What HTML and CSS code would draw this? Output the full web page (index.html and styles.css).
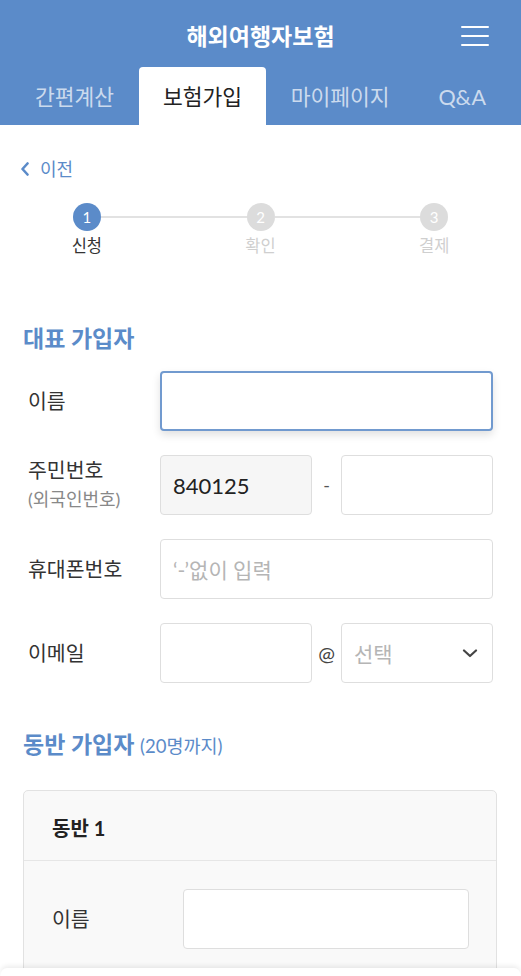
FILE: index.html
```html
<!DOCTYPE html>
<html lang="ko">
<head>
<meta charset="utf-8">
<title>해외여행자보험</title>
<link rel="stylesheet" href="styles.css">
</head>
<body>
<header class="header">
  <div class="topbar">
    <span class="spacer"></span>
    <h1 class="title">해외여행자보험</h1>
    <button class="menu" type="button" aria-label="메뉴"><span></span><span></span><span></span></button>
  </div>
  <nav class="tabs">
    <a class="tab">간편계산</a>
    <a class="tab active">보험가입</a>
    <a class="tab">마이페이지</a>
    <a class="tab">Q&amp;A</a>
  </nav>
</header>

<div class="backwrap">
  <a class="back"><svg class="back-icon" width="10" height="14" viewBox="0 0 10 14"><path d="M7.5 1.5 L2.5 7 L7.5 12.5" fill="none" stroke="currentColor" stroke-width="2.6" stroke-linecap="round" stroke-linejoin="round"/></svg>이전</a>
</div>

<section class="steps">
  <div class="track">
    <span class="num active">1</span><span class="line"></span><span class="num">2</span><span class="line"></span><span class="num">3</span>
  </div>
  <div class="step-labels">
    <span class="step-label active">신청</span>
    <span class="step-label">확인</span>
    <span class="step-label">결제</span>
  </div>
</section>

<main class="main">
  <h2 class="sec-title">대표 가입자</h2>
  <div class="form">
    <div class="row">
      <label class="lbl">이름</label>
      <div class="field focus"></div>
    </div>
    <div class="row">
      <label class="lbl two">주민번호<small class="sub">(외국인번호)</small></label>
      <div class="split">
        <div class="field readonly"><span class="val">840125</span></div>
        <span class="sep">-</span>
        <div class="field"></div>
      </div>
    </div>
    <div class="row">
      <label class="lbl">휴대폰번호</label>
      <div class="field"><span class="ph">‘-’없이 입력</span></div>
    </div>
    <div class="row">
      <label class="lbl">이메일</label>
      <div class="split">
        <div class="field"></div>
        <span class="sep at">@</span>
        <div class="field select"><span class="ph">선택</span><svg class="chev" width="16" height="9" viewBox="0 0 16 9"><path d="M2 1.5 L8 7 L14 1.5" fill="none" stroke="#444" stroke-width="2.2" stroke-linecap="round" stroke-linejoin="round"/></svg></div>
      </div>
    </div>
  </div>

  <h2 class="sec-title sec2">동반 가입자 <span class="sec-sub">(20명까지)</span></h2>
  <div class="card">
    <div class="card-head">동반 1</div>
    <div class="card-body">
      <div class="row card-row">
        <label class="lbl">이름</label>
        <div class="field"></div>
      </div>
    </div>
  </div>
</main>

<div class="bottom-bar"></div>
</body>
</html>
```

FILE: styles.css
```css
* { box-sizing: border-box; }
html, body { margin: 0; padding: 0; }
body {
  width: 521px;
  min-height: 976px;
  background: #fff;
  font-family: "Lato", "Noto Sans CJK KR", sans-serif;
  color: #333;
  overflow: hidden;
}

.header { background: #5b8bc9; }
.topbar {
  height: 67px;
  display: grid;
  grid-template-columns: 1fr auto 1fr;
  align-items: start;
}
.title {
  margin: 21px 0 0;
  font-size: 23px;
  line-height: 30px;
  font-weight: 700;
  color: #fff;
  letter-spacing: 0;
}
.menu {
  justify-self: end;
  margin: 26px 32px 0 0;
  padding: 0;
  width: 28px;
  border: 0;
  background: none;
  display: flex;
  flex-direction: column;
  gap: 7px;
}
.menu span { display: block; height: 2px; background: #fff; border-radius: 1px; }

.tabs {
  height: 58px;
  display: flex;
  justify-content: space-between;
  padding: 0 11px;
}
.tab {
  padding: 1px 24px 0;
  display: flex;
  align-items: center;
  font-size: 21.5px;
  line-height: 28px;
  color: rgba(255,255,255,0.7);
}
.tab.active {
  background: #fff;
  color: #222;
  border-radius: 4px 4px 0 0;
}

.backwrap { padding: 32px 0 0 20px; }
.back {
  display: inline-flex;
  align-items: center;
  gap: 10px;
  font-size: 18px;
  line-height: 24px;
  color: #5b8bc9;
}
.back-icon { display: block; }

.steps { margin-top: 22px; }
.track {
  display: flex;
  align-items: center;
  padding: 0 72.8px;
}
.num {
  width: 28px;
  height: 28px;
  border-radius: 50%;
  background: #dcdcdc;
  color: #fff;
  font-size: 15px;
  line-height: 28px;
  text-align: center;
  flex: none;
}
.num.active { background: #5b8bc9; }
.line { flex: 1; height: 2px; background: #e2e2e2; }
.step-labels {
  margin-top: 3px;
  display: grid;
  grid-template-columns: repeat(3, 1fr);
  text-align: center;
}
.step-label { font-size: 16.5px; line-height: 24px; color: #cfcfcf; }
.step-label.active { color: #333; }

.main { padding: 0 24px 0 23px; }
.sec-title {
  margin: 65px 0 0;
  font-size: 23px;
  line-height: 30px;
  font-weight: 700;
  color: #5b8bc9;
}
.sec2 { margin-top: 46px; }
.sec-sub { font-size: 18.5px; font-weight: 400; color: #5b8bc9; }

.form {
  margin-top: 18px;
  margin-right: 4px;
  display: flex;
  flex-direction: column;
  gap: 24px;
}
.row {
  display: grid;
  grid-template-columns: 137px 1fr;
  align-items: center;
}
.lbl {
  padding-left: 5px;
  font-size: 20.5px;
  line-height: 26px;
  color: #333;
}
.lbl.two { display: flex; flex-direction: column; line-height: 29px; }
.sub { font-size: 18px; color: #888; line-height: 29px; }

.field {
  height: 60px;
  border: 1px solid #dedede;
  border-radius: 4px;
  background: #fff;
  display: flex;
  align-items: center;
  padding: 0 12px;
}
.field.focus {
  border: 2px solid #719acf;
  box-shadow: 0 4px 8px rgba(0,0,0,0.12);
}
.field.readonly { background: #f6f6f6; }
.val { font-size: 22px; color: #222; }
.ph { font-size: 21px; color: #b5b5b5; }
.select { justify-content: space-between; padding-right: 14px; }
.chev { display: block; }

.split {
  display: grid;
  grid-template-columns: 1fr 29px 1fr;
  align-items: center;
}
.sep { text-align: center; font-size: 18px; color: #555; }
.sep.at { font-size: 20px; color: #444; }

.card {
  margin-top: 29px;
  background: #f9f9f9;
  border: 1px solid #e2e2e2;
  border-radius: 5px;
}
.card-head {
  padding: 23px 28px 18px;
  font-size: 20px;
  line-height: 28px;
  font-weight: 700;
  color: #222;
  border-bottom: 1px solid #e6e6e6;
}
.card-body { padding: 28px 27px 40px 28px; }
.card-row { grid-template-columns: 131px 1fr; }
.card-row .lbl { padding-left: 0; }

.bottom-bar {
  position: fixed;
  left: 1px;
  right: 1px;
  bottom: 0;
  height: 8px;
  background: #fff;
  border-radius: 6px 6px 0 0;
  box-shadow: 0 -2px 5px rgba(0,0,0,0.08);
}
```
